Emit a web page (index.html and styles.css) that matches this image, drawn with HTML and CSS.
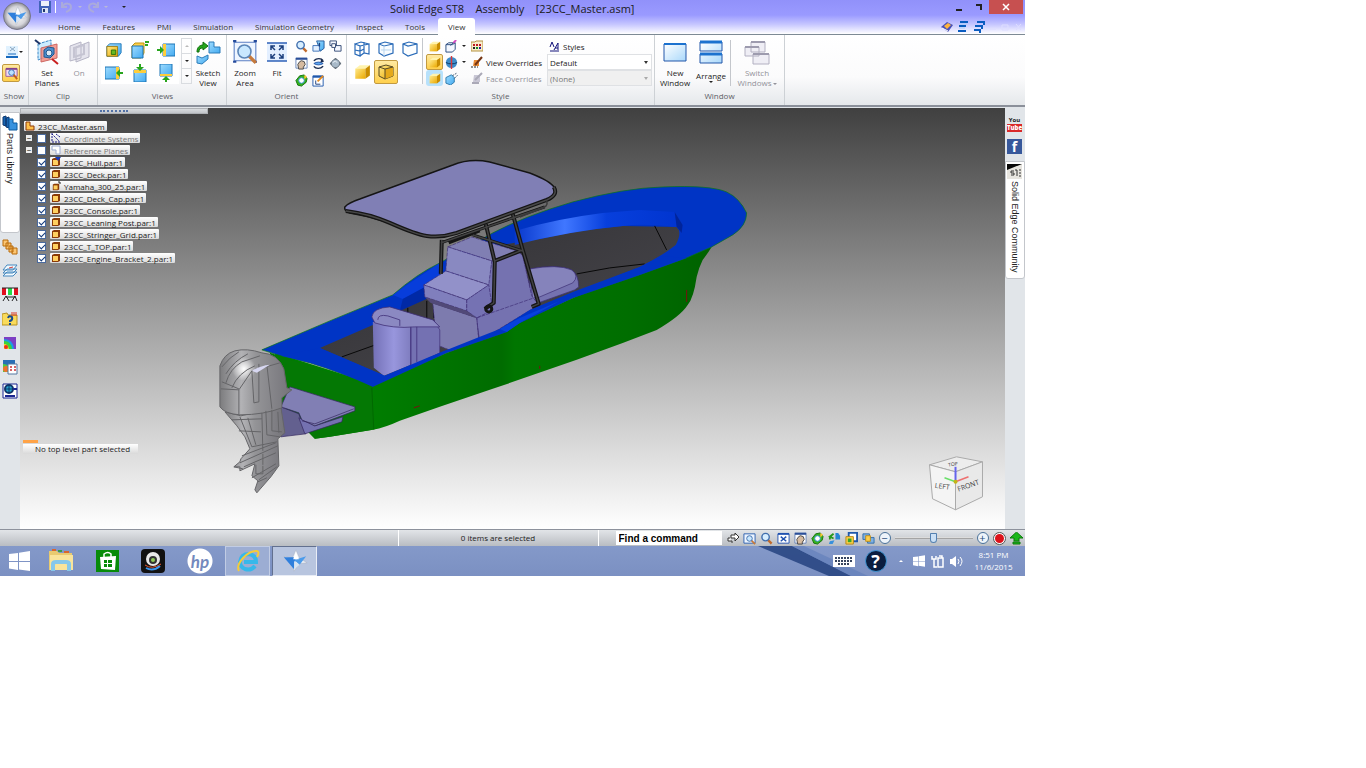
FILE: index.html
```html
<!DOCTYPE html>
<html lang="en">
<head>
  <meta charset="utf-8">
  <title>Solid Edge ST8 - Assembly - [23CC_Master.asm]</title>
  <link rel="stylesheet" href="styles.css">
</head>
<body>
  <!-- shared icons -->
  <svg class="defs" aria-hidden="true">
    <defs>
      <linearGradient id="gold" x1="0" y1="0" x2="1" y2="1"><stop offset="0" stop-color="#ffe98a"/><stop offset="1" stop-color="#eba900"/></linearGradient>
      <linearGradient id="sky" x1="0" y1="0" x2="1" y2="1"><stop offset="0" stop-color="#9fdcff"/><stop offset="1" stop-color="#43aaf0"/></linearGradient>
      <linearGradient id="pane" x1="0" y1="0" x2="1" y2="1"><stop offset="0" stop-color="#fff"/><stop offset="1" stop-color="#a9d8fb"/></linearGradient>
      <radialGradient id="orb"><stop offset="0" stop-color="#fff"/><stop offset=".7" stop-color="#d5d5da"/><stop offset="1" stop-color="#8c8c94"/></radialGradient>
      <symbol id="i-mag" viewBox="0 0 14 14"><path d="M8.500 8.500l4 4" stroke="#c06a2c" stroke-width="2.500"/><circle cx="6" cy="5.500" r="4" fill="#d7eeff" stroke="#416fae" stroke-width="1.500"/></symbol>
      <symbol id="i-zoomarea" viewBox="0 0 24 24"><path d="M2 3h20v17H2z" fill="#eef5ff" stroke="#5b7fc4"/><path d="M1 2h3M20 2h3M1 21h3M20 21h3" stroke="#244a9c" stroke-width="2"/><path d="M15 15l7 7" stroke="#c67a3c" stroke-width="3"/><circle cx="11.500" cy="11.500" r="6" fill="#c9e8ff" stroke="#5c86b8" stroke-width="1.500"/></symbol>
      <symbol id="i-fit" viewBox="0 0 24 24"><path d="M2 3h20v18H2z" fill="#e3efff"/><path d="M2 3h20M2 21h20" stroke="#2f62b8" stroke-width="1.500"/><path d="M10 10L6 6m0 4V6h4M14 10l4-4m-4 0h4v4M10 14l-4 4m0-4v4h4M14 14l4 4m0-4v4h-4" fill="none" stroke="#1b3e7c" stroke-width="1.500"/></symbol>
      <symbol id="i-hand" viewBox="0 0 14 14"><path d="M1 1h12v11H1z" fill="#fff" stroke="#6784b8"/><path d="M1 2h12" stroke="#2a4e98" stroke-width="2"/><path d="M4 13L3 8l2-3 2-1 3 1 1 3-2 3v2z" fill="#d6bba0" stroke="#444"/></symbol>
      <symbol id="i-rotate" viewBox="0 0 14 14"><path d="M3 12L1 7l4-5 5-1 3 4-1 4-5 4z" fill="#38b41f" stroke="#12720d"/><circle cx="7" cy="7" r="3" fill="#fff" stroke="#2c8dd0"/><path d="M10 1l3 2-3 3z" fill="#ffc331"/></symbol>
      <symbol id="i-spin" viewBox="0 0 14 14"><path d="M2 4c3-3 8-3 10 0M12 10c-3 3-8 3-10 0" fill="none" stroke="#18294c" stroke-width="1.500"/><path d="M2 7c3-2 7-2 10 0-3 2-7 2-10 0" fill="#62aaf0" stroke="#2455a8"/><path d="M10 2l3 3-4 1z" fill="#18294c"/></symbol>
      <symbol id="i-look" viewBox="0 0 14 14"><path d="M5 1h8v8l-4 3z" fill="url(#sky)" stroke="#245b9c"/><path d="M1 6h7v6H1z" fill="#e3f0ff" stroke="#3c70b6"/><path d="M8 3v4" stroke="#1b3e7c" stroke-width="1.500"/></symbol>
      <symbol id="i-prev" viewBox="0 0 14 14"><path d="M1 1h7v5H1zM6 6h7v6H6z" fill="#f5f8ff" stroke="#354c76"/><path d="M3 4h4v4H3z" fill="#fff" stroke="#354c76"/></symbol>
      <symbol id="i-gear" viewBox="0 0 14 14"><path d="M7 1v12M1 7h12" stroke="#65707c" stroke-width="2"/><circle cx="7" cy="7" r="4.500" fill="#a8b9c8" stroke="#65707c"/><path d="M4 6q3-3 5 0" stroke="#eef3f8" fill="none"/></symbol>
      <symbol id="i-sketch" viewBox="0 0 14 14"><path d="M1 2h11v11H1z" fill="#fff" stroke="#1f58ac"/><path d="M1 3h11" stroke="#1f58ac" stroke-width="2"/><path d="M6 8l6-6" stroke="#e58a1f" stroke-width="2"/><path d="M4 7v4h5" fill="none" stroke="#1b3e7c"/></symbol>
      <symbol id="i-cube" viewBox="0 0 16 16"><path d="M2 5l4-3h9l-4 3z" fill="#fff3ad"/><path d="M2 5h9v9H2z" fill="url(#gold)"/><path d="M11 5l4-3v9l-4 3z" fill="#c98d00"/></symbol>
      <symbol id="i-wire" viewBox="0 0 16 16"><path d="M1 3l5 2v10l-5-2zM6 5l9-2v10l-5-1-4 3M1 3l6-2 8 2M10 1v11M1 9l5 1 4-2" fill="none" stroke="#2a6bb8" stroke-width="1.200"/></symbol>
      <symbol id="i-wire2" viewBox="0 0 16 16"><path d="M1 3v9l5 3 9-3V3L7 1z" fill="#f8fcff" stroke="#2a6bb8" stroke-width="1.200"/><path d="M1 3l5 2 9-2" fill="none" stroke="#2a6bb8"/><path d="M6 5v10M3 9h10" stroke="#b9d5ef"/></symbol>
      <symbol id="i-wire3" viewBox="0 0 16 16"><path d="M1 3v9l5 3 9-3V3L7 1z" fill="#fcfeff" stroke="#2a6bb8" stroke-width="1.200"/><path d="M1 3l5 2 9-2" fill="none" stroke="#2a6bb8" stroke-width="1.200"/></symbol>
      <symbol id="i-sharp" viewBox="0 0 16 16"><path d="M1 3l7-2 7 2v9l-8 3-6-3z" fill="url(#gold)" stroke="#564a25"/><path d="M7 5l8-2v9l-8 3z" fill="#e5a91a"/><path d="M1 3l6 2 8-2M7 5v10" fill="none" stroke="#564a25"/></symbol>
      <symbol id="i-part" viewBox="0 0 10 10"><path d="M1 2l2-1h6v7l-2 1H1z" fill="#8a3b08"/><path d="M2 3h5v5H2z" fill="#ffd060"/></symbol>
      <symbol id="i-floppy" viewBox="0 0 12 12"><path d="M0 0h12v12H0z" fill="#4263b8"/><path d="M2 0h8v5H2z" fill="#edf1fb"/><path d="M3 7h6v5H3z" fill="#dce3f5"/><path d="M4 8h2v3H4z" fill="#20366d"/></symbol>
      <symbol id="i-undo" viewBox="0 0 14 12"><path d="M2 1v5h5M2 6c3-5 9-4 9 0 0 2-2 4-5 5" fill="none" stroke="#aaaadc" stroke-width="2"/></symbol>
      <symbol id="i-solid" viewBox="0 0 28 28"><path d="M2 9l9 2 4-9 4 9 8 5-9 1-5 8-3-9z" fill="#e9edf4" stroke="#a6aebd" stroke-width=".500"/><path d="M2 10l13 0-2 13z" fill="#2f7fdc"/><path d="M13 13l13-4-7 9z" fill="#4b9bea"/><path d="M15 4l3 8-6 0z" fill="#fff"/><path d="M13 14l6 4-6 5z" fill="#d7e4f2"/></symbol>
      <symbol id="i-windows" viewBox="0 0 21 20"><path d="M0 3l9-1v8H0zM10 1.800L21 0v10H10zM0 11h9v8l-9-1.500zM10 11h11v9l-11-1.500z" fill="#fff"/></symbol>
    </defs>
  </svg>

  <div class="desktop">
    <header class="titlebar">
      <button class="app-button" aria-label="Application menu"><svg viewBox="0 0 28 28"><circle cx="14" cy="14" r="13.500" fill="url(#orb)" stroke="#777789"/><use href="#i-solid" x="3" y="3" width="22" height="22"/></svg></button>
      <div class="title-row">
        <div class="quick-access">
          <button aria-label="Save"><svg width="12" height="12"><use href="#i-floppy"/></svg></button>
          <span class="qa-line"></span>
          <button aria-label="Undo"><svg width="14" height="12"><use href="#i-undo"/></svg></button>
          <i class="caret pale"></i>
          <button aria-label="Redo"><svg class="flip" width="14" height="12"><use href="#i-undo"/></svg></button>
          <i class="caret pale"></i>
          <i class="caret customize"></i>
        </div>
        <h1>Solid Edge ST8 &nbsp;&nbsp; Assembly &nbsp;&nbsp; [23CC_Master.asm]</h1>
        <div class="window-controls">
          <button aria-label="Minimize"><svg width="10" height="10" viewBox="0 0 10 10"><path d="M2 8h6" stroke="#222" stroke-width="2"/></svg></button>
          <button aria-label="Restore"><svg width="10" height="10" viewBox="0 0 10 10"><path d="M2 3h5v5" fill="none" stroke="#222" stroke-width="2"/></svg></button>
          <button class="close" aria-label="Close"><svg width="8" height="8" viewBox="0 0 8 8"><path d="M1 1l6 6M7 1L1 7" stroke="#fff" stroke-width="1.500"/></svg></button>
        </div>
      </div>
      <nav class="tabs">
        <button>Home</button>
        <button>Features</button>
        <button>PMI</button>
        <button>Simulation</button>
        <button>Simulation Geometry</button>
        <button>Inspect</button>
        <button>Tools</button>
        <button class="active">View</button>
        <div class="tab-tools">
          <svg width="12" height="12" viewBox="0 0 12 12"><path d="M0 6l6-5 6 3-5 7z" fill="#4a52b8"/><path d="M3 5l4-3 3 2-4 4z" fill="#ffb43c"/><path d="M1 7l6 3" stroke="#fff"/></svg>
          <svg width="12" height="12" viewBox="0 0 12 12"><path d="M3 1h8M2 5h7M1 10h8" stroke="#0a5cc0" stroke-width="2"/><path d="M3 3h7M2 7h6" stroke="#a9cdf5"/></svg>
          <svg width="12" height="12" viewBox="0 0 12 12"><path d="M4 1h7v3M2 5h7v3M1 9h6v3" fill="none" stroke="#0a5cc0" stroke-width="2"/></svg>
          <svg width="34" height="8" viewBox="0 0 34 8"><path d="M1 6h6M13 2h6v5h-6zM27 1l5 6M32 1l-5 6" fill="none" stroke="#dedeff"/></svg>
        </div>
      </nav>
    </header>

    <section class="ribbon">
      <div class="group">
        <div class="group-body show-body">
          <button aria-label="Construction display"><svg width="18" height="18" viewBox="0 0 18 18"><path d="M1 3h12v11H1z" fill="#e0f1fe"/><path d="M1 14h12" stroke="#1769bd" stroke-width="2"/><path d="M3 11h8" stroke="#1769bd"/><path d="M5 4l5 4M10 4L5 8" stroke="#8ba7c1"/><path d="M14 8h4l-2 2z" fill="#222"/></svg></button>
          <button class="selected" aria-label="Show all"><svg width="15" height="15" viewBox="0 0 16 16"><path d="M2 3h12v8H2z" fill="#f0dcf4" stroke="#9a5a98"/><path d="M2 3h12" stroke="#84408a" stroke-width="2"/><path d="M10 9l4 5" stroke="#c46019" stroke-width="2"/><circle cx="8" cy="7" r="3" fill="#bce3ff" stroke="#3d6eb5"/></svg></button>
        </div>
        <div class="group-label">Show</div>
      </div>

      <div class="group">
        <div class="group-body">
          <button class="big"><svg width="26" height="26" viewBox="0 0 26 26"><path d="M4 5l13-4v15L4 21z" fill="#ccecff" stroke="#3b87c6" stroke-dasharray="3 1"/><path d="M7 9l16-4v14L7 23z" fill="#f18d84" stroke="#c64d46" opacity=".85"/><path d="M10 11l4-3 6 1v6l-4 4-6-1z" fill="#4c8fcf" stroke="#1f568e"/><circle cx="15" cy="14" r="3" fill="#dce9f6" stroke="#1f568e"/><path d="M1 1l5 4" stroke="#1d3568" stroke-width="2"/><path d="M18 20l6 5" stroke="#c92020" stroke-width="2"/></svg><span>Set<br>Planes</span></button>
          <button class="big" disabled><svg width="26" height="26" viewBox="0 0 26 26"><path d="M4 7l11-4v16L4 22zM10 8l13-5v15l-13 5z" fill="#e5e4ed" stroke="#b6b5c6"/><path d="M8 9l10-3v9L8 18z" fill="none" stroke="#c5c4d2" stroke-width="2"/></svg><span>On</span></button>
        </div>
        <div class="group-label">Clip</div>
      </div>

      <div class="group views">
        <div class="group-body">
          <div class="view-gallery">
            <button aria-label="Front view"><svg width="16" height="16" viewBox="0 0 18 18"><path d="M1 5l3-3h13v10l-3 4H1z" fill="url(#sky)" stroke="#1d74b5"/><path d="M1 5h12v11H1z" fill="url(#gold)" stroke="#9c7a0d"/><path d="M6 9h5v5H6z" fill="#66ba21" stroke="#256e0c"/></svg></button>
            <button aria-label="Back view"><svg width="18" height="18" viewBox="0 0 18 18"><path d="M1 5l3-3h9v10l-3 5H1z" fill="#ffd04a" stroke="#c3940d"/><path d="M1 5h11v12H1z" fill="url(#sky)" stroke="#1d74b5"/><path d="M14 4h3M14 1h4" stroke="#30a51d" stroke-width="2"/></svg></button>
            <button aria-label="Left view"><svg width="18" height="18" viewBox="0 0 18 18"><path d="M6 3h12v12H6z" fill="url(#sky)" stroke="#1d74b5"/><path d="M6 3h3v12H6z" fill="#ffcd3a"/><path d="M0 8h3V5l4 4-4 4v-3H0z" fill="#28a51d"/></svg></button>
            <button aria-label="Right view"><svg width="18" height="18" viewBox="0 0 18 18"><path d="M0 3h14v12H0z" fill="url(#sky)" stroke="#1d74b5"/><path d="M11 3h3v12h-3z" fill="#ffcd3a"/><path d="M18 8h-3V5l-4 4 4 4v-3h3z" fill="#28a51d"/></svg></button>
            <button aria-label="Top view"><svg width="18" height="18" viewBox="0 0 18 18"><path d="M3 6h12v12H3z" fill="url(#sky)" stroke="#1d74b5"/><path d="M3 6h12v3H3z" fill="#ffcd3a"/><path d="M8 0v3H5l4 4 4-4h-3V0z" fill="#28a51d"/></svg></button>
            <button aria-label="Bottom view"><svg width="18" height="18" viewBox="0 0 18 18"><path d="M3 0h12v12H3z" fill="url(#sky)" stroke="#1d74b5"/><path d="M3 10h12v2H3z" fill="#ffcd3a"/><path d="M8 18v-2H5l4-4 4 4h-3v2z" fill="#28a51d"/></svg></button>
          </div>
          <div class="gallery-scroll">
            <button aria-label="Scroll up"><i class="caret up pale"></i></button>
            <button aria-label="Scroll down"><i class="caret"></i></button>
            <button aria-label="More views"><i class="caret"></i></button>
          </div>
          <button class="big"><svg width="26" height="26" viewBox="0 0 26 26"><path d="M14 3h5v5h6v6H14z" fill="url(#sky)" stroke="#2c7db9"/><path d="M2 17l5 2 6-3v4l-6 5-5-1z" fill="url(#sky)" stroke="#2c7db9"/><path d="M2 13c0-5 3-7 6-7V3l5 4-5 4V9c-3 0-4 1-4 4z" fill="#24a51c" stroke="#11700e"/></svg><span>Sketch<br>View</span></button>
        </div>
        <div class="group-label">Views</div>
      </div>

      <div class="group">
        <div class="group-body">
          <button class="big"><svg width="26" height="26"><use href="#i-zoomarea"/></svg><span>Zoom<br>Area</span></button>
          <button class="big"><svg width="24" height="26"><use href="#i-fit"/></svg><span>Fit</span></button>
          <div class="icon-grid">
            <button aria-label="Zoom"><svg width="13" height="13"><use href="#i-mag"/></svg></button>
            <button aria-label="Look at face"><svg width="13" height="13"><use href="#i-look"/></svg></button>
            <button aria-label="Previous view"><svg width="13" height="13"><use href="#i-prev"/></svg></button>
            <button aria-label="Pan"><svg width="13" height="13"><use href="#i-hand"/></svg></button>
            <button aria-label="Spin about"><svg width="13" height="13"><use href="#i-spin"/></svg></button>
            <button aria-label="Camera"><svg width="13" height="13"><use href="#i-gear"/></svg></button>
            <button aria-label="Rotate"><svg width="13" height="13"><use href="#i-rotate"/></svg></button>
            <button aria-label="Sketch plane"><svg width="13" height="13"><use href="#i-sketch"/></svg></button>
          </div>
        </div>
        <div class="group-label">Orient</div>
      </div>

      <div class="group">
        <div class="group-body">
          <div class="style-gallery">
            <button aria-label="Wire frame"><svg width="16" height="16"><use href="#i-wire"/></svg></button>
            <button aria-label="Hidden edges"><svg width="16" height="16"><use href="#i-wire2"/></svg></button>
            <button aria-label="Visible edges"><svg width="16" height="16"><use href="#i-wire3"/></svg></button>
            <button aria-label="Shaded"><svg width="18" height="18"><use href="#i-cube"/></svg></button>
            <button class="selected" aria-label="Shaded with edges"><svg width="16" height="16"><use href="#i-sharp"/></svg></button>
          </div>
          <div class="style-options">
            <button aria-label="Drop shadow"><svg width="13" height="13"><use href="#i-cube"/></svg></button>
            <button class="split" aria-label="Sharpen"><svg width="13" height="13" viewBox="0 0 14 14"><path d="M1 5l3-2h7v7l-3 3H1z" fill="#f4f8ff" stroke="#25477b"/><path d="M1 5h7l3-2M6 6l5-5" stroke="#25477b" fill="none"/><path d="M9 3l3-3" stroke="#d24bc1" stroke-width="2"/></svg><i class="caret"></i></button>
            <button class="label-button" aria-label="Color manager"><svg width="12" height="12" viewBox="0 0 12 12"><path d="M0 2h4l1-1h7v10H0z" fill="#f9edcc" stroke="#b49241"/><path d="M2 5h2M5 5h2M8 5h2" stroke="#bc1c21" stroke-width="2"/><path d="M2 8h2" stroke="#222" stroke-width="2"/><path d="M5 8h2" stroke="#168d27" stroke-width="2"/><path d="M8 8h2" stroke="#25259d" stroke-width="2"/></svg></button>
            <button class="label-button"><svg width="11" height="11" viewBox="0 0 11 11"><path d="M1 6l2-5 2 5M5 9l4-7v7M1 10h9M6 7h3" fill="none" stroke="#12127a"/></svg>Styles</button>

            <button class="selected" aria-label="Floor shadow"><svg width="13" height="13"><use href="#i-cube"/></svg></button>
            <button class="split" aria-label="Section"><svg width="13" height="13" viewBox="0 0 14 14"><circle cx="7" cy="7" r="6" fill="#3d8cca"/><path d="M1 7c3 2 9 2 12 0" stroke="#0d355f" fill="none"/><path d="M7 0v14" stroke="#d7373a" stroke-width="1.500"/></svg><i class="caret"></i></button>
            <label class="label-button" for="view-overrides"><svg width="12" height="12" viewBox="0 0 12 12"><path d="M3 4h5v6H2z" fill="#e98a33"/><path d="M4 9l7-8" stroke="#753513" stroke-width="2"/><path d="M0 11h7" stroke="#222" stroke-dasharray="2 1"/></svg>View Overrides</label>
            <span class="dropdown"><select id="view-overrides"><option>Default</option></select></span>

            <button class="blue-halo" aria-label="Reflections"><svg width="13" height="13"><use href="#i-cube"/></svg></button>
            <button class="split" aria-label="Perspective"><svg width="13" height="13" viewBox="0 0 14 14"><path d="M1 6l6-3 3 3v5l-4 3-5-2z" fill="url(#sky)" stroke="#2e79aa"/><path d="M8 4l5-3M10 7l4-4" stroke="#3d526c" stroke-dasharray="2 1"/></svg></button>
            <label class="label-button off" for="face-overrides"><svg width="12" height="12" viewBox="0 0 12 12"><path d="M3 3h6v7H2z" fill="#c9c7d5"/><path d="M4 8l7-7M1 11h7" stroke="#aaa9b7" stroke-width="2"/></svg>Face Overrides</label>
            <span class="dropdown"><select id="face-overrides" disabled><option>(None)</option></select></span>
          </div>
        </div>
        <div class="group-label">Style</div>
      </div>

      <div class="group">
        <div class="group-body">
          <button class="big wide"><svg width="26" height="26" viewBox="0 0 26 26"><path d="M2 5h22v17H2z" fill="url(#pane)" stroke="#2256a9"/><path d="M2 5h22" stroke="#1c72cf" stroke-width="2"/></svg><span>New<br>Window</span></button>
          <button class="big wide arrange"><svg width="26" height="26" viewBox="0 0 26 26"><path d="M2 3h22v9H2zM2 15h22v9H2z" fill="url(#pane)" stroke="#2256a9"/><path d="M2 3h22M2 15h22" stroke="#1c72cf" stroke-width="3"/></svg><span>Arrange</span><i class="caret"></i></button>
          <span class="divider"></span>
          <button class="big wider" disabled><svg width="26" height="26" viewBox="0 0 26 26"><path d="M7 3h14v10H7zM1 8h14v9H1zM9 15h16v10H9z" fill="#efeef5" stroke="#b2b0c1"/><path d="M7 3h14M1 8h14M9 15h16" stroke="#9d9bae" stroke-width="2"/></svg><span>Switch<br>Windows<i class="caret inline"></i></span></button>
        </div>
        <div class="group-label">Window</div>
      </div>
    </section>

    <main class="workspace">
      <aside class="left-bar">
        <button class="side-tab"><svg width="16" height="16" viewBox="0 0 16 16"><path d="M1 2l3-1v10l-3-1zM4 3l3-1v11l-3-1z" fill="#1765b3" stroke="#0c376f"/><path d="M7 4h4v4h4v7H7z" fill="#3992de" stroke="#0c5aa0"/></svg><span>Parts Library</span></button>
        <button aria-label="Family of assemblies"><svg width="16" height="16" viewBox="0 0 16 16"><path d="M1 1h5v6H1zM4 4h5v6H4zM7 7h4v6H7zM10 9h5v6h-5z" fill="#fcc673" stroke="#b86b0b"/></svg></button>
        <button aria-label="Layers"><svg width="16" height="16" viewBox="0 0 16 16"><path d="M1 13l4-4h10l-4 4zM1 10l4-4h10l-4 4zM1 7l4-5h10l-4 5z" fill="#f1faff" stroke="#4688be"/><path d="M7 5l4-1" stroke="#d23d3d"/></svg></button>
        <button aria-label="Sensors"><svg width="16" height="16" viewBox="0 0 16 16"><path d="M0 1h16v7H0z" fill="#fff"/><path d="M0 1h4v7H0zM12 1h4v7h-4z" fill="#e20f1e"/><path d="M6 1h4v7H6z" fill="#24db4b"/><path d="M0 1h16M1 14l3-5 3 5M10 14l3-5 2 5M4 10h9" stroke="#222" fill="none"/></svg></button>
        <button aria-label="Feature playback"><svg width="16" height="16" viewBox="0 0 16 16"><path d="M0 3l5-1 1 2h9v10H0z" fill="#f9db5b" stroke="#b79323"/><path d="M9 2h6M9 4h6" stroke="#db3b25"/><path d="M6 7q1-3 4-1 1 3-2 4v1M8 12v2" fill="none" stroke="#164b91" stroke-width="2"/></svg></button>
        <button aria-label="Simulation"><svg width="16" height="16" viewBox="0 0 16 16"><path d="M2 2h12v12H2z" fill="#7d40c4"/><path d="M2 4q9 0 10 10H2z" fill="#1c9be5"/><path d="M2 6q7 0 8 8H2z" fill="#3bd23b"/><path d="M2 9q4 0 5 5H2z" fill="#ffd524"/><circle cx="4" cy="12" r="2" fill="#ec2d1b"/></svg></button>
        <button aria-label="Simulation results"><svg width="16" height="16" viewBox="0 0 16 16"><path d="M1 1h12v12H1z" fill="#286eb5"/><path d="M1 5q7 0 8 8H1z" fill="#4acb47"/><circle cx="4" cy="10" r="3" fill="#ef712b"/><path d="M6 5h9v10H6z" fill="#fff" stroke="#5478a2"/><path d="M8 8h2M8 11h2M12 8h2M12 11h2" stroke="#c93135" stroke-width="1.500"/></svg></button>
        <button aria-label="Engineering reference"><svg width="16" height="16" viewBox="0 0 16 16"><path d="M1 1h14v14H1z" fill="#fff" stroke="#172290"/><circle cx="7" cy="6" r="4" fill="#26a8d0" stroke="#10346a" stroke-width="2"/><path d="M3 13h10M11 6h4" stroke="#1a2590" stroke-width="2"/><path d="M7 2v8M3 6h8" stroke="#0b3668"/></svg></button>
      </aside>

      <div class="viewport">
        <svg class="model" viewBox="20 108 985 421" preserveAspectRatio="xMinYMin meet" role="img" aria-label="23CC boat assembly">
          <defs>
            <linearGradient id="hullShade" gradientUnits="userSpaceOnUse" x1="373" x2="712" y1="0" y2="0"><stop offset="0" stop-color="#007d00"/><stop offset=".380" stop-color="#006c00"/><stop offset=".420" stop-color="#007600"/><stop offset=".750" stop-color="#006e00"/><stop offset="1" stop-color="#006200"/></linearGradient>
            <linearGradient id="coaming" gradientUnits="userSpaceOnUse" x1="515" x2="682" y1="0" y2="0"><stop offset="0" stop-color="#0838cc"/><stop offset=".300" stop-color="#4077ff"/><stop offset=".550" stop-color="#073fdc"/><stop offset="1" stop-color="#0034cf"/></linearGradient>
            <linearGradient id="cabin" x1="0" x2="1" y2="1"><stop offset="0" stop-color="#302f32"/><stop offset=".700" stop-color="#434247"/><stop offset="1" stop-color="#2e2e30"/></linearGradient>
            <linearGradient id="postShade" x1="0" x2="1"><stop offset="0" stop-color="#7370b6"/><stop offset=".500" stop-color="#9896dd"/><stop offset="1" stop-color="#7977b8"/></linearGradient>
            <linearGradient id="motor" x1="0" x2="1"><stop offset="0" stop-color="#7c7c7e"/><stop offset=".300" stop-color="#b2b2b5"/><stop offset=".500" stop-color="#949497"/><stop offset="1" stop-color="#747379"/></linearGradient>
            <radialGradient id="glint"><stop offset="0" stop-color="#fff"/><stop offset="1" stop-color="#fff" stop-opacity="0"/></radialGradient>
          </defs>

          <!-- hull -->
          <path d="M275 353L373 384L507 328L640 268L712 247Q707 255 703 260Q699 268 697 277Q694 298 688 305Q681 316 657 330L623 343L577 360L493 389L440 407L400 421Q385 428 373 430L330 437L315 439L282 405Z" fill="url(#hullShade)"/>
          <path d="M373 387L373 430L330 437L315 439L282 405L270 353Z" fill="#047804"/>
          <path d="M372 388L374 430" stroke="#006800"/>
          <!-- deck cap -->
          <path d="M262 350L330 321L393 295Q417 274 440 263L493 233Q525 216 573 202Q625 188 663 187Q711 185 727 192Q740 198 747 213Q747 226 733 235L712 247L687 258L640 275L573 298L520 323L507 332L447 353L373 387Q340 372 310 363L281 356Z" fill="#0034c5" stroke="#067717" stroke-width=".700"/>
          <path d="M393 295L410 283L440 263V279L403 299Z" fill="#073ddb"/>
          <path d="M403 299L440 279V293L373 325L400 311Z" fill="#0029a6"/>
          <path d="M320 348L373 325L400 311L440 293L500 246Q520 241 540 239Q585 229 623 226L677 227Q683 232 676 245Q661 257 640 267L573 292L530 310L500 329L430 357L385 376Z" fill="url(#cabin)"/>
          <path d="M515 231Q555 219 603 213L640 210L675 212L683 225L682 233L677 227Q643 223 623 226Q570 231 515 245Z" fill="url(#coaming)"/>
          <path d="M675 212L683 225L682 233L677 227Z" fill="#00249a"/>
          <path d="M655 226L667 250M577 274L610 268L645 264M342 357L384 342M408 322V308M427 320V301M434 318V303" fill="none" stroke="#080808"/>

          <!-- bow seat -->
          <path d="M530 269Q558 264 572 270Q579 275 579 287L575 290L530 306Z" fill="#7572b0" stroke="#3b2e73" stroke-width=".700"/>
          <path d="M530 269Q558 264 572 270Q580 276 573 283L533 300Z" fill="#8583bb" stroke="#3b2e73" stroke-width=".700"/>
          <!-- console -->
          <g stroke="#403078" stroke-width=".700" stroke-dasharray="4 1">
            <path d="M492 261L517 250L523 256L532 296L539 305L480 341L476 318L467 310L466 300L488 285Z" fill="#7572b0"/>
            <path d="M448 247L472 237L517 251L492 261Z" fill="#807fb3"/>
            <path d="M448 247L492 261L489 285L446 271Z" fill="#8989c1"/>
            <path d="M446 271L489 285L467 300L424 285Z" fill="#9291c9"/>
            <path d="M424 285L467 300V311L425 297Z" fill="#807fbd"/>
            <path d="M467 300L489 285L493 310L477 318L467 311Z" fill="#7572b3"/>
            <path d="M433 303L477 318L479 339L452 351L437 345Z" fill="#7d7bae"/>
            <path d="M477 318L537 297M477 318L479 339" fill="none"/>
          </g>
          <path d="M425 297L467 311L477 318L431 303Z" fill="#514978"/>
          <!-- leaning post -->
          <path d="M373 322L415 326L411 365L384 376L374 368Z" fill="url(#postShade)"/>
          <path d="M411 326L434 321L440 330V353L411 367Z" fill="#7471b2" stroke="#403078" stroke-width=".700"/>
          <path d="M372 317Q373 308 390 307L433 320L440 327L415 327Q393 329 375 323Z" fill="#8b89c2" stroke="#403078" stroke-width=".800"/>
          <path d="M378 320Q378 314 388 316L400 320V326M411 327V366M417 327V362" fill="none" stroke="#403078" stroke-width=".800"/>
          <!-- near gunwale -->
          <path d="M320 348L385 376L430 357L477 338L500 329L530 310L573 293L607 280L640 267L661 256L687 258L640 275L573 298L520 323L507 332L447 353L373 387Q340 372 310 363L281 356Z" fill="#0034c5"/>
          <path d="M500 329L520 318L560 301L520 323L507 332Z" fill="#0742dc"/>

          <!-- t-top frame -->
          <g fill="none" stroke="#151515" stroke-width="4" stroke-linejoin="round">
            <path d="M442 240L441 274M486 224L495 262L494 303L485 309M513 214L523 250L539 304L532 307M495 261L523 250"/>
            <path d="M473 235L523 251M441 243L510 219L545 207M449 243L480 231" stroke-width="3"/>
            <path d="M442 240L441 274M486 224L495 262L494 303L485 309M513 214L523 250L539 304L532 307M495 261L523 250M473 235L523 251M441 243L545 207" stroke="#424242" stroke-width="1.500"/>
            <circle cx="489" cy="309" r="3" stroke-width="3"/>
            <path d="M345 207Q348 203 360 199L453 165Q470 158 490 162L530 173Q551 181 555 188Q558 196 547 200L457 233Q442 238 427 236Q415 234 390 223L370 217L350 213Q344 211 345 207Z" fill="#807fb5" stroke-width="1.500"/>
            <path d="M346 211Q370 214 390 223Q417 235 427 236Q442 238 457 233L547 200Q559 195 554 187" stroke-width="4"/>
            <path d="M346 211Q370 214 390 223Q417 235 427 236Q442 238 457 233L547 200Q559 195 554 187" stroke="#484848" stroke-width="1.500"/>
            <path d="M547 201Q549 207 540 209L520 217" stroke="#3a3a3a" stroke-width="1.500"/>
          </g>

          <!-- engine bracket -->
          <g stroke="#34275f" stroke-width=".700">
            <path d="M281 407L299 414L306 434L281 437Z" fill="#63608f"/>
            <path d="M299 418L315 426L343 417L342 422L305 434Z" fill="#7471b0"/>
            <path d="M290 387L355 407L355 411L315 426L302 420L299 413L281 407Z" fill="#817fb4"/>
            <path d="M302 421L315 424L354 409" fill="none"/>
          </g>

          <!-- outboard -->
          <g stroke="#646467" stroke-width="1" stroke-linejoin="round">
            <path d="M225 412L241 416L281 407L285 433L278 439L279 466L271 477L257 493L255 490L258 481L252 476L255 464L240 471V467L234 467L240 462L241 459L250 449L245 437L237 426Z" fill="url(#motor)"/>
            <path d="M220 366Q224 354 235 351Q247 348 262 353Q278 354 284 369L287 388L292 390L282 398L282 408Q264 415 240 415Q225 414 220 407Z" fill="url(#motor)"/>
            <ellipse cx="244" cy="369" rx="12" ry="12" fill="url(#glint)" stroke="none"/>
            <path d="M222 367Q230 357 239 352M226 374Q234 361 248 354M226 383Q230 369 242 362L260 356M221 389L239 390L252 371L280 363M239 390V415M252 371L254 403L259 402V364M267 365L272 409M222 382L239 389M232 388Q238 373 255 366M240 417L252 447L277 442M248 418L256 445M266 411L267 435L280 437M272 410V431L282 432M278 412L279 433M242 456L276 443M240 463L278 446M244 467L276 453M252 478L276 464M259 480L277 467M262 413L263 451M232 420L262 419M239 431L261 432M256 465V474H263V466M263 454V465M234 467L243 469M258 482L267 478" fill="none"/>
          </g>
          <path d="M252 371Q260 366 270 365L257 373Z" fill="#d7d7f1"/>
          <path d="M414 408L420 406M540 366V369M687 290V302" stroke="#791010"/>

          <!-- view cube -->
          <g stroke="#aaa" stroke-width="1" stroke-linejoin="round">
            <path d="M930 465L957 457L983 462L956 472Z" fill="#ededed"/>
            <path d="M930 465L956 472V510L933 499Z" fill="#f4f4f4"/>
            <path d="M956 472L983 462V497L956 510Z" fill="#e9e9e9"/>
          </g>
          <text class="cube-text" transform="translate(935 488) rotate(8)">LEFT</text>
          <text class="cube-text" transform="translate(959 492) rotate(-20)">FRONT</text>
          <text class="cube-text top-text" transform="translate(949 467) rotate(-10)">TOP</text>
          <path d="M956 482V467" stroke="#6464ee" stroke-width="2"/>
          <path d="M956 482L945 478" stroke="#69df69" stroke-width="1.500"/>
          <path d="M956 482L969 477" stroke="#ed7070" stroke-width="1.500"/>
          <circle cx="956" cy="482" r="2" fill="#c4b317"/>
        </svg>

        <div class="overlay">
          <div class="panel-grip"></div>
          <ul class="tree">
            <li class="root"><span class="node"><svg width="10" height="10" viewBox="0 0 10 10"><path d="M1 1h4v4h4v4H1z" fill="#ffc04a" stroke="#8d3807"/></svg>23CC_Master.asm</span></li>
            <li class="dim"><button aria-label="Collapse">−</button><input type="checkbox" id="n1"><label class="node" for="n1"><svg width="10" height="10" viewBox="0 0 10 10"><path d="M1 0v9h9M1 1l7 7M5 1l4 3" fill="none" stroke="#1b1b86" stroke-dasharray="2 1"/></svg>Coordinate Systems</label></li>
            <li class="dim"><button aria-label="Collapse">−</button><input type="checkbox" id="n2"><label class="node" for="n2"><svg width="10" height="10" viewBox="0 0 10 10"><path d="M1 5V1h8v8H5V5z" fill="#fff" stroke="#9baad0"/></svg>Reference Planes</label></li>
            <li><input type="checkbox" id="n3" checked><label class="node" for="n3"><svg width="10" height="10" viewBox="0 0 10 10"><use href="#i-part"/><path d="M4 0h6L7 4z" fill="#173abb"/></svg>23CC_Hull.par:1</label></li>
            <li><input type="checkbox" id="n4" checked><label class="node" for="n4"><svg width="10" height="10"><use href="#i-part"/></svg>23CC_Deck.par:1</label></li>
            <li><input type="checkbox" id="n5" checked><label class="node" for="n5"><svg width="10" height="10" viewBox="0 0 10 10"><use href="#i-part" x="1" y="2" width="8" height="8"/><path d="M7 1h2v2" stroke="#222" fill="none"/></svg>Yamaha_300_25.par:1</label></li>
            <li><input type="checkbox" id="n6" checked><label class="node" for="n6"><svg width="10" height="10"><use href="#i-part"/></svg>23CC_Deck_Cap.par:1</label></li>
            <li><input type="checkbox" id="n7" checked><label class="node" for="n7"><svg width="10" height="10"><use href="#i-part"/></svg>23CC_Console.par:1</label></li>
            <li><input type="checkbox" id="n8" checked><label class="node" for="n8"><svg width="10" height="10"><use href="#i-part"/></svg>23CC_Leaning Post.par:1</label></li>
            <li><input type="checkbox" id="n9" checked><label class="node" for="n9"><svg width="10" height="10"><use href="#i-part"/></svg>23CC_Stringer_Grid.par:1</label></li>
            <li><input type="checkbox" id="n10" checked><label class="node" for="n10"><svg width="10" height="10"><use href="#i-part"/></svg>23CC_T_TOP.par:1</label></li>
            <li><input type="checkbox" id="n11" checked><label class="node" for="n11"><svg width="10" height="10"><use href="#i-part"/></svg>23CC_Engine_Bracket_2.par:1</label></li>
          </ul>
          <div class="selection-note"><i></i><p>No top level part selected</p></div>
        </div>
      </div>

      <aside class="right-bar">
        <button class="youtube" aria-label="YouTube"><span>You</span><b>Tube</b></button>
        <button class="facebook" aria-label="Facebook">f</button>
        <button class="side-tab"><svg width="15" height="15" viewBox="0 0 15 15"><path d="M0 0h15v15H0z" fill="#e7e5df"/><path d="M0 0h15L0 6z" fill="#080808"/><path d="M7 7H4v2h3v2H4M8 6h2v6M12 6h2M12 9h2M12 12h2" stroke="#333" fill="none"/></svg><span>Solid Edge Community</span></button>
      </aside>
    </main>

    <div class="statusbar">
      <div class="status-cell first"></div>
      <div class="status-cell">0 items are selected</div>
      <div class="status-tools">
        <input class="command" type="text" value="Find a command" aria-label="Find a command">
        <button aria-label="Go"><svg width="13" height="12" viewBox="0 0 13 12"><path d="M5 3h4V1l4 4-4 4V6H5zM4 6H2v3h4v2" fill="#fff" stroke="#333"/></svg></button>
        <button aria-label="Zoom area"><svg width="13" height="13" viewBox="0 0 14 14"><path d="M1 2h12v10H1z" fill="#eef5ff" stroke="#2a5fb0"/><path d="M9 9l4 4" stroke="#c67a3c" stroke-width="2"/><circle cx="7" cy="7" r="3" fill="#c9e8ff" stroke="#3c6cab"/></svg></button>
        <button aria-label="Zoom"><svg width="13" height="13"><use href="#i-mag"/></svg></button>
        <button aria-label="Fit"><svg width="13" height="13" viewBox="0 0 14 14"><path d="M1 2h12v10H1z" fill="#fff" stroke="#2052b0"/><path d="M1 2h12" stroke="#2052b0" stroke-width="2"/><path d="M4 5l6 5M10 5l-6 5" stroke="#2052b0" stroke-width="1.500"/></svg></button>
        <button aria-label="Pan"><svg width="13" height="13"><use href="#i-hand"/></svg></button>
        <button aria-label="Rotate"><svg width="13" height="13"><use href="#i-rotate"/></svg></button>
        <button aria-label="Sketch view"><svg width="13" height="13" viewBox="0 0 14 14"><path d="M8 1h3l2 3v4H8z" fill="#2686d3"/><path d="M6 2L2 5l4 2M2 5v3" fill="none" stroke="#26991b" stroke-width="2"/><path d="M2 10l5-1-2 4H1z" fill="#3890dc"/></svg></button>
        <button aria-label="View orientation"><svg width="13" height="13" viewBox="0 0 14 14"><path d="M4 1h9v9H4z" fill="#fff" stroke="#2159aa" stroke-width="2"/><path d="M1 5h8v8H1z" fill="#ffd34a" stroke="#b58511"/><path d="M3 7h4v4H3z" fill="#39a52a"/></svg></button>
        <button aria-label="View styles"><svg width="13" height="13" viewBox="0 0 14 14"><path d="M1 2h7v6H1zM6 6h7v6H6z" fill="#7db1e5" stroke="#356da7"/><path d="M4 4h5v6H4z" fill="#ffcf4b" stroke="#bb8b16"/></svg></button>
        <button class="zoom-btn" aria-label="Zoom out">−</button>
        <input class="zoom-slider" type="range" min="0" max="100" value="50" aria-label="Zoom level">
        <button class="zoom-btn" aria-label="Zoom in">+</button>
        <button aria-label="Record"><svg width="13" height="13" viewBox="0 0 13 13"><circle cx="6.500" cy="6.500" r="6" fill="#fff" stroke="#555"/><circle cx="6.500" cy="6.500" r="4.500" fill="#dc1119"/></svg></button>
        <button aria-label="Upload"><svg width="13" height="13" viewBox="0 0 13 13"><path d="M6.500 0L13 6H9v3H4V6H0zM3 10h7v2H3z" fill="#1ab71a" stroke="#0d7b0d"/></svg></button>
      </div>
    </div>

    <footer class="taskbar">
      <svg class="streak" viewBox="0 0 110 30" preserveAspectRatio="none"><path d="M0 0H34L93 30H71Z" fill="#24427f" opacity=".85"/><path d="M34 0H46L110 30H93Z" fill="#5f7db9" opacity=".6"/></svg>
      <button aria-label="Start"><svg width="21" height="20"><use href="#i-windows"/></svg></button>
      <button aria-label="File Explorer"><svg width="26" height="24" viewBox="0 0 26 24"><path d="M1 2h8l2 2h13v17H1z" fill="#e8ca70"/><path d="M2 6h23v15H2z" fill="#f9e49b"/><path d="M4 1h4M16 3h5" stroke="#d8662f" stroke-width="2"/><path d="M10 2h4" stroke="#3b9c4a" stroke-width="2"/><path d="M5 22v-7q0-2 3-2h10q3 0 3 2v7" fill="none" stroke="#86c8eb" stroke-width="4"/></svg></button>
      <button aria-label="Store"><svg width="23" height="22" viewBox="0 0 23 22"><path d="M0 0h23v22H0z" fill="#078b09"/><path d="M4 7l16-1-1 14-14-1z" fill="#fff"/><path d="M8 7V4q4-3 7 0v3" fill="none" stroke="#fff" stroke-width="1.500"/><path d="M8 10h3v3H8zM12 10h4v3h-4zM8 14h3v3H8zM12 14h4v3h-4z" fill="#078b09"/></svg></button>
      <button aria-label="Webcam"><svg width="24" height="24" viewBox="0 0 24 24"><rect width="24" height="24" rx="4" fill="#111"/><circle cx="12" cy="10" r="7" fill="#e9e9e9"/><circle cx="12" cy="11" r="4" fill="#333"/><circle cx="12" cy="11" r="2" fill="#8fcb58"/><path d="M4 16q7 5 16-1" fill="none" stroke="#eb5a34"/><path d="M5 19q7 4 14-2" fill="none" stroke="#3a95ed" stroke-width="2"/></svg></button>
      <button class="hp" aria-label="HP">hp</button>
      <button class="running" aria-label="Internet Explorer"><svg width="24" height="24" viewBox="0 0 24 24"><path d="M19 17Q15 22 9 20 4 18 4 13 5 5 13 5q7 1 7 8H8" fill="none" stroke="#37b8ea" stroke-width="4"/><path d="M3 22C-1 15 12 1 21 2q3 1 0 6" fill="none" stroke="#f4cb3b" stroke-width="2"/></svg></button>
      <button class="running current" aria-label="Solid Edge"><svg width="26" height="26"><use href="#i-solid"/></svg></button>
      <div class="tray">
        <button aria-label="Keyboard"><svg width="22" height="12" viewBox="0 0 22 12"><path d="M0 0h22v12H0z" fill="#fff"/><path d="M2 3h18M2 6h18M5 9h12" stroke="#37455f" stroke-width="2" stroke-dasharray="2 1"/></svg></button>
        <button class="help" aria-label="Help">?</button>
        <i class="caret up light"></i>
        <svg width="12" height="12"><use href="#i-windows"/></svg>
        <svg width="13" height="13" viewBox="0 0 13 13"><path d="M1 1v3h4V1M3 4v8h3M7 3h5v9H7zM8 1h3v2" fill="none" stroke="#fff" stroke-width="1.500"/></svg>
        <svg width="13" height="13" viewBox="0 0 13 13"><path d="M0 4h2l4-3v11L2 9H0z" fill="#fff"/><path d="M8 4q2 2 0 5M10 2q4 4 0 9" fill="none" stroke="#fff"/></svg>
        <p class="clock">8:51 PM<br>11/6/2015</p>
      </div>
    </footer>
  </div>
</body>
</html>
```
FILE: styles.css
```css
* {
  margin: 0;
  padding: 0;
  box-sizing: border-box;
}

body {
  background: #fff;
  font-family: "Open Sans", sans-serif;
  font-size: 8px;
  color: #1b1b1b;
}

button, input, select {
  font: inherit;
  color: inherit;
  border: none;
  background: none;
}

button {
  display: flex;
  align-items: center;
  justify-content: center;
}

svg {
  display: block;
  flex: none;
}

.defs {
  position: absolute;
  width: 0;
  height: 0;
}

.desktop {
  width: 75vw;
  min-height: 75vh;
  display: flex;
  flex-direction: column;
  white-space: nowrap;
}

.caret {
  width: 0;
  height: 0;
  border: 2px solid transparent;
  border-top-color: #222;
  border-bottom: none;
}

.caret.up {
  border-top: none;
  border-bottom: 2px solid #222;
}

.caret.pale {
  border-top-color: #b9b9d8;
  border-bottom-color: #b9b9b9;
}

.caret.light {
  margin-right: 4px;
  border-bottom-color: #fff;
}

.flip {
  transform: scaleX(-1);
}

/* title bar */
.titlebar {
  position: relative;
  height: 35px;
  background: linear-gradient(#9191fa, #9a9aff 15px, #c4c4ff 24px, #fff 34px);
  border-bottom: 1px solid #7d8a94;
}

.app-button {
  position: absolute;
  left: 3px;
  top: 2px;
  width: 28px;
  height: 28px;
}

.title-row {
  display: grid;
  grid-template-columns: 1fr auto 1fr;
  height: 18px;
}

.quick-access {
  display: flex;
  align-items: center;
  gap: 4px;
  height: 14px;
  padding-left: 39px;
}

.qa-line {
  width: 1px;
  height: 12px;
  background: #fff;
}

.customize {
  margin-left: 10px;
}

h1 {
  font-size: 11px;
  font-weight: normal;
  line-height: 18px;
}

.window-controls {
  display: flex;
  justify-content: flex-end;
  padding-right: 2px;
  height: 14px;
}

.window-controls button {
  width: 20px;
}

.window-controls .close {
  width: 34px;
  background: #c75050;
}

.tabs {
  display: flex;
  height: 17px;
  padding-left: 47px;
}

.tabs button {
  padding: 0 11px;
  color: #333;
}

.tabs .active {
  margin-left: 2px;
  padding: 0 10px;
  background: #fff;
  border-radius: 3px 3px 0 0;
}

.tab-tools {
  margin-left: auto;
  display: flex;
  align-items: center;
  gap: 4px;
  padding-right: 2px;
}

/* ribbon */
.ribbon {
  display: flex;
  height: 72px;
  background: linear-gradient(#fff, #fbfbfc 60%, #e5e8eb);
  border-bottom: 2px solid #8b909a;
}

.group {
  display: flex;
  flex-direction: column;
  padding: 3px 2px 0;
  border-right: 1px solid #cdd1d5;
}

.group.views {
  padding-left: 3px;
}

.group-body {
  display: flex;
  height: 50px;
}

.group-label {
  text-align: center;
  line-height: 16px;
  color: #5c6066;
}

.selected {
  background: linear-gradient(#ffe9a0, #ffd04d);
  border: 1px solid #c29a41;
  border-radius: 2px;
}

.show-body {
  width: 24px;
  flex-direction: column;
  gap: 3px;
  padding-top: 5px;
}

.show-body .selected {
  width: 18px;
  height: 18px;
}

.big {
  width: 32px;
  flex-direction: column;
  justify-content: flex-start;
  line-height: 10px;
}

.big svg {
  margin: 1px 0 3px;
}

.big:disabled, .off {
  color: #92929a;
}

.big.wide {
  width: 36px;
}

.big.wider {
  width: 50px;
}

.big.arrange svg {
  margin-bottom: 6px;
}

.caret.inline {
  display: inline-block;
  margin-left: 1px;
  vertical-align: middle;
  border-top-color: #92929a;
}

.divider {
  width: 1px;
  margin: 2px 1px;
  background: #c4c7cc;
}

.view-gallery {
  display: grid;
  grid-template-columns: repeat(3, 26px);
  height: 46px;
  background: #fff;
}

.gallery-scroll {
  width: 11px;
  height: 46px;
  margin-left: 2px;
  display: grid;
  border: 1px solid #d9dce0;
}

.gallery-scroll button + button {
  border-top: 1px solid #d9dce0;
}

.icon-grid {
  display: grid;
  grid-template-columns: repeat(3, 17px);
  grid-template-rows: repeat(3, 17px);
}

.style-gallery {
  display: grid;
  grid-template-columns: repeat(3, 24px);
  height: 46px;
  margin-left: 1px;
  background: #fff;
  border-right: 1px solid #c4c7cc;
}

.style-options {
  display: grid;
  grid-template-columns: 17px 26px 78px 105px;
  grid-template-rows: repeat(3, 16px);
  padding-left: 3px;
}

.style-options .split {
  justify-content: flex-start;
  gap: 4px;
  padding-left: 2px;
}

.blue-halo {
  background: #b7e1fb;
  border-radius: 3px;
}

.label-button {
  display: flex;
  align-items: center;
  justify-content: flex-start;
  gap: 3px;
  padding-left: 2px;
}

.dropdown {
  position: relative;
}

.dropdown select {
  appearance: none;
  width: 100%;
  height: 16px;
  padding: 0 2px;
  background: #fff;
  border: 1px solid #dfe1e4;
}

.dropdown select:disabled {
  background: #f0f0f0;
  color: #777;
  opacity: 1;
}

.dropdown::after {
  content: "";
  position: absolute;
  right: 4px;
  top: 7px;
  border: 2px solid transparent;
  border-top: 3px solid #333;
  border-bottom: none;
}

.dropdown:has(:disabled)::after {
  border-top-color: #aaa;
}

/* workspace */
.workspace {
  flex: 1;
  display: flex;
  padding-top: 1px;
  background: #e1e5e9;
}

.left-bar, .right-bar {
  width: 20px;
  display: flex;
  flex-direction: column;
  align-items: center;
  gap: 8px;
  padding-top: 4px;
}

.side-tab {
  width: 100%;
  flex-direction: column;
  justify-content: flex-start;
  gap: 2px;
  padding: 2px 0;
  background: #fff;
  border: 1px solid #c3c6cb;
  border-radius: 0 0 3px 3px;
}

.left-bar .side-tab {
  height: 121px;
  margin-bottom: -2px;
}

.side-tab span {
  writing-mode: vertical-rl;
  font-family: "Liberation Sans", sans-serif;
  font-size: 9px;
  line-height: 12px;
  color: #222;
}

.right-bar {
  gap: 7px;
  padding-top: 8px;
}

.right-bar .side-tab {
  height: 118px;
}

.youtube {
  width: 15px;
  flex-direction: column;
  font-size: 6px;
  font-weight: bold;
  line-height: 8px;
}

.youtube b {
  width: 15px;
  background: #da2929;
  color: #fff;
}

.facebook {
  width: 15px;
  height: 15px;
  background: #37589b;
  color: #fff;
  font-size: 14px;
  font-weight: bold;
  line-height: 15px;
}

.viewport {
  flex: 1;
  display: grid;
  background: linear-gradient(#404040, #fff);
}

.model, .overlay {
  grid-area: 1 / 1;
}

.model {
  width: 100%;
}

.cube-text {
  font-size: 7px;
  fill: #444;
}

.top-text {
  font-size: 5px;
}

.overlay {
  z-index: 1;
}

.panel-grip {
  width: 188px;
  height: 6px;
  display: flex;
  justify-content: center;
  align-items: center;
  background: linear-gradient(#d9dcdf, #c2c5c9);
  border: 1px solid #aeb1b5;
}

.panel-grip::after {
  content: "";
  width: 28px;
  border-top: 2px dotted #5271a6;
}

.tree {
  list-style: none;
  padding: 6px 0 0 4px;
}

.tree li {
  display: flex;
  align-items: center;
  height: 12px;
  padding-left: 13px;
}

.tree .root {
  padding-left: 0;
}

.tree .dim {
  padding-left: 2px;
  color: #777;
}

.tree button {
  width: 6px;
  height: 6px;
  margin-right: 5px;
  background: #eee;
  color: #000;
  line-height: 6px;
}

.tree input {
  appearance: none;
  width: 9px;
  height: 9px;
  margin-right: 4px;
  background: #fff;
  border: 1px solid #4b6b9e;
}

.tree input:checked::after {
  content: "";
  display: block;
  width: 5px;
  height: 3px;
  margin: 1px;
  border: solid #123a7c;
  border-width: 0 0 1px 1px;
  transform: rotate(-45deg);
}

.node {
  display: flex;
  align-items: center;
  gap: 3px;
  height: 10px;
  padding: 0 2px 0 1px;
  background: linear-gradient(#fff, #d9d9d9);
  border-radius: 1px;
}

.selection-note {
  width: 115px;
  margin: 176px 0 0 3px;
}

.selection-note i {
  display: block;
  width: 15px;
  height: 3px;
  background: #ffa347;
}

.selection-note p {
  margin-top: 1px;
  padding-left: 12px;
  line-height: 10px;
  background: linear-gradient(#fff, #d9d9d9);
}

/* status bar */
.statusbar {
  display: flex;
  height: 17px;
  background: linear-gradient(#e2e5e8, #b9bdc2);
  border-top: 1px solid #8d929c;
}

.status-cell {
  width: 200px;
  line-height: 16px;
  text-align: center;
  border-right: 1px solid #fff;
}

.status-cell.first {
  flex: 1;
}

.status-tools {
  display: flex;
  align-items: center;
  gap: 4px;
  padding: 0 2px 0 17px;
}

.command {
  width: 106px;
  height: 14px;
  padding: 0 3px;
  background: #fff;
  font-family: "Liberation Sans", sans-serif;
  font-size: 10px;
  font-weight: bold;
  color: #000;
}

.zoom-btn {
  width: 12px;
  height: 12px;
  border: 1px solid #4a7199;
  border-radius: 50%;
  background: #eef4fa;
  font-size: 11px;
  line-height: 10px;
  color: #254c7b;
}

.zoom-slider {
  appearance: none;
  width: 78px;
  height: 12px;
  background: linear-gradient(#f8f8f8, #888) center / 100% 2px no-repeat;
}

.zoom-slider::-webkit-slider-thumb {
  appearance: none;
  width: 7px;
  height: 10px;
  background: #cbe0f5;
  border: 1px solid #5380b0;
  border-radius: 1px 1px 4px 4px;
}

/* taskbar */
.taskbar {
  position: relative;
  display: flex;
  height: 30px;
  background: linear-gradient(#8499c9, #7b90c2);
}

.streak {
  position: absolute;
  left: 74%;
  width: 110px;
  height: 30px;
}

.taskbar > button {
  width: 46px;
}

.taskbar > button:first-of-type {
  width: 38px;
}

.taskbar > .hp {
  width: 48px;
  margin-right: 1px;
  font-family: "Lato", sans-serif;
  font-size: 17px;
  font-style: italic;
  font-weight: bold;
  color: #7389bd;
  background: radial-gradient(circle, #fff 12px, transparent 13px);
}

.taskbar > .running {
  margin-right: 2px;
  width: 45px;
  background: #9cadd3;
  border: 1px solid #c1cce4;
}

.taskbar > .current {
  background: #b8c5df;
  border-color: #62708f #e9edf6 #e9edf6 #62708f;
}

.tray {
  position: relative;
  margin-left: auto;
  display: flex;
  align-items: center;
  gap: 6px;
  padding-right: 12px;
  color: #fff;
}

.help {
  width: 22px;
  height: 22px;
  margin: 0 6px 0 4px;
  border-radius: 50%;
  background: #0a1d3f;
  border: 1px solid #3e92cf;
  font-size: 18px;
  font-weight: bold;
}

.clock {
  margin-left: 6px;
  text-align: center;
  line-height: 12px;
}
```
